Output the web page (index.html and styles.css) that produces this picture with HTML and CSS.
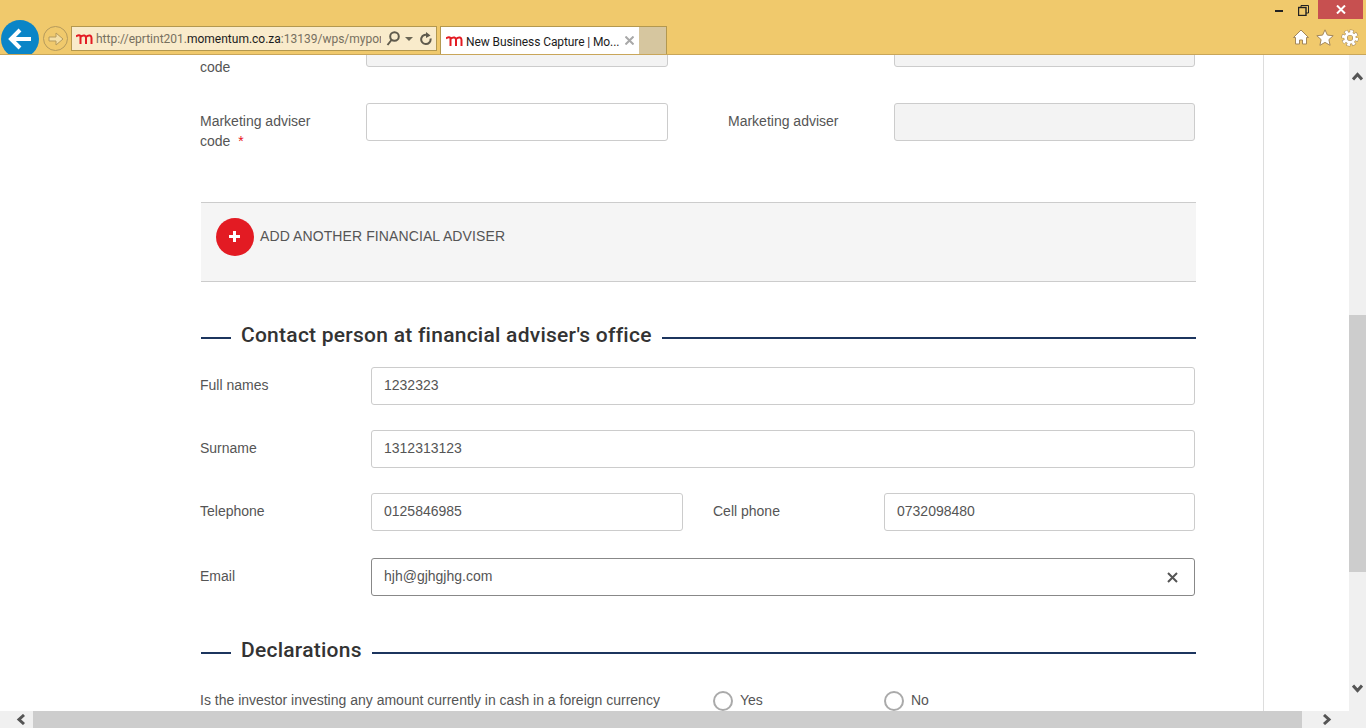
FILE: index.html
```html
<!DOCTYPE html>
<html lang="en">
<head>
  <meta charset="UTF-8" />
  <title>New Business Capture | Momentum</title>
  <meta name="viewport" content="width=device-width, initial-scale=1" />
  <link rel="stylesheet" href="styles.css">
</head>
<body>
  <header class="toolbar">
    <div class="window-controls">
      <span class="win-btn"><svg width="8" height="2"><rect width="8" height="2" fill="#222"/></svg></span>
      <span class="win-btn"><svg width="11" height="11" fill="none" stroke="#222"><path d="M3 2.500V.5h7.500v7.500H8"/><rect x=".5" y="2.500" width="7.500" height="8" stroke-width="1.400"/></svg></span>
      <span class="win-close"><svg width="10" height="9" stroke="#fff" stroke-width="2"><path d="M1 .5l8 8M9 .5l-8 8"/></svg></span>
    </div>
    <div class="nav-row">
      <span class="back-btn">
        <svg width="24" height="22" fill="none" stroke="#fff" stroke-width="4"><path d="M23 11H4M12 2l-9 9 9 9"/></svg>
      </span>
      <span class="forward-btn">
        <svg width="16" height="14" fill="#f4dfa6" stroke="#b59a5c"><path d="M1 5h7V1l7 6-7 6V9H1z"/></svg>
      </span>
      <div class="address">
        <svg class="logo" width="17" height="10" fill="none" stroke="#e31b23" stroke-width="2"><path d="M0 2.500Q3 .5 4.500 2V10M4.500 3Q6.500 1 8.500 1.500 10 2 10 4v6M10 3q2-2 4-1.500 1.500.5 1.500 2.500v6"/></svg>
        <span class="url">http://eprtint201.<b>momentum.co.za</b>:13139/wps/mypor</span>
        <svg class="addr-icon" width="14" height="15" fill="none" stroke="#5f5a4c" stroke-width="2"><circle cx="8.500" cy="5.500" r="4.300"/><path d="M5.500 9l-4 5"/></svg>
        <svg class="addr-caret" width="8" height="4"><path d="M0 0h8L4 4z" fill="#6b6655"/></svg>
        <svg class="addr-refresh" width="12" height="14" fill="none" stroke="#5f5a4c" stroke-width="2"><path d="M8.500 3.500a4.700 4.700 0 1 0 2 3"/><path d="M6 0l4.500 3.500L6 6" fill="#5f5a4c" stroke="none"/></svg>
      </div>
      <div class="tab">
        <svg class="logo" width="17" height="10" fill="none" stroke="#e31b23" stroke-width="2"><path d="M0 2.500Q3 .5 4.500 2V10M4.500 3Q6.500 1 8.500 1.500 10 2 10 4v6M10 3q2-2 4-1.500 1.500.5 1.500 2.500v6"/></svg>
        <span class="tab-title">New Business Capture | Mo...</span>
        <svg class="tab-close" width="9" height="9" stroke="#a8a8a8" stroke-width="2"><path d="M.5.500l8 8M8.500.500l-8 8"/></svg>
      </div>
      <div class="new-tab"></div>
      <div class="tools">
        <svg width="16" height="16" fill="#fff" stroke="#a3875a"><path d="M8 1l7.500 7.500h-2V15H9.500v-4h-3v4H2.500V8.500h-2z"/></svg>
        <svg width="18" height="17" fill="#fff" stroke="#a3875a"><path d="M9 .8l2.400 5.300 5.800.6-4.300 3.900 1.200 5.700L9 13.400l-5.100 2.900 1.200-5.700L.8 6.700l5.800-.6z"/></svg>
        <svg width="18" height="18" fill="none"><circle cx="9" cy="9" r="6.600" stroke="#a3875a" stroke-width="4" stroke-dasharray="3.600 1.580" stroke-dashoffset=".4"/><circle cx="9" cy="9" r="4.400" stroke="#a3875a" stroke-width="4"/><circle cx="9" cy="9" r="6.600" stroke="#fff" stroke-width="3" stroke-dasharray="2.800 2.380"/><circle cx="9" cy="9" r="4.400" stroke="#fff" stroke-width="2.800"/></svg>
      </div>
    </div>
  </header>

  <div class="shell">
    <main class="pane">
      <div class="page">
        <form class="content">
          <div class="row row-top">
            <label class="field-label label-scrolled">code</label>
            <input type="text" disabled>
            <span></span>
            <input type="text" disabled>
          </div>
          <div class="row row-top">
            <label class="field-label">Marketing adviser<br>code <span class="required">*</span></label>
            <input type="text">
            <label class="field-label label-right">Marketing adviser</label>
            <input type="text" disabled>
          </div>

          <div class="add-box">
            <span class="add-icon"><svg width="11" height="11" fill="#fff"><path d="M4 0h3v4h4v3H7v4H4V7H0V4h4z"/></svg></span>
            <span class="add-text">ADD ANOTHER FINANCIAL ADVISER</span>
          </div>

          <h2 class="section-title contact-title"><span>Contact person at financial adviser's office</span></h2>
          <div class="row row-wide">
            <label class="field-label">Full names</label>
            <input type="text" value="1232323">
          </div>
          <div class="row row-wide">
            <label class="field-label">Surname</label>
            <input type="text" value="1312313123">
          </div>
          <div class="row row-split">
            <label class="field-label">Telephone</label>
            <input type="text" value="0125846985">
            <label class="field-label label-split">Cell phone</label>
            <input type="text" value="0732098480">
          </div>
          <div class="row row-wide">
            <label class="field-label">Email</label>
            <div class="input-wrap">
              <input class="input-active" type="text" value="hjh@gjhgjhg.com">
              <svg class="clear-icon" width="11" height="11" stroke="#555" stroke-width="2"><path d="M1 1l9 9M10 1l-9 9"/></svg>
            </div>
          </div>

          <h2 class="section-title declarations-title"><span>Declarations</span></h2>
          <div class="question">
            <span class="question-text">Is the investor investing any amount currently in cash in a foreign currency</span>
            <label class="radio"><span class="radio-dot"></span>Yes</label>
            <label class="radio"><span class="radio-dot"></span>No</label>
          </div>
        </form>
      </div>
    </main>

    <div class="vbar">
      <svg class="arrow-up" width="11" height="10" fill="none" stroke="#555" stroke-width="3"><path d="M1 8.500l4.500-5 4.500 5"/></svg>
      <div class="vthumb"></div>
      <svg class="arrow-down" width="11" height="10" fill="none" stroke="#555" stroke-width="3"><path d="M1 1.500l4.500 5 4.500-5"/></svg>
    </div>

    <div class="hbar">
      <svg class="arrow-left" width="10" height="11" fill="none" stroke="#555" stroke-width="3"><path d="M8 1L3 5.500 8 10"/></svg>
      <div class="hthumb"></div>
      <svg class="arrow-right" width="10" height="11" fill="none" stroke="#555" stroke-width="3"><path d="M2 1l5 4.500L2 10"/></svg>
    </div>
  </div>
</body>
</html>
```

FILE: styles.css
```css
* {
  box-sizing: border-box;
}
html, body {
  margin: 0;
  height: 100%;
  overflow: hidden;
}
body {
  display: flex;
  flex-direction: column;
  height: 728px;
  font-family: 'Liberation Sans', Arial, sans-serif;
  font-size: 14px;
  color: #555;
  background: #fff;
}

/* browser chrome */
.toolbar {
  height: 55px;
  flex: none;
  background: #f0c96c;
  border-bottom: 1px solid #c9a65a;
  overflow: hidden;
}
.window-controls {
  display: flex;
  justify-content: flex-end;
  height: 19px;
  padding-right: 3px;
}
.win-btn {
  width: 25px;
  display: flex;
  align-items: center;
  justify-content: center;
  padding-top: 2px;
}
.win-close {
  width: 45px;
  margin-left: 2px;
  background: #c75050;
  display: flex;
  align-items: center;
  justify-content: center;
}
.nav-row {
  display: flex;
  height: 35px;
  padding-left: 1px;
}
.back-btn {
  width: 38px;
  height: 38px;
  margin-top: 1px;
  flex: none;
  border-radius: 50%;
  background: #0a85c7;
  display: flex;
  align-items: center;
  justify-content: center;
}
.forward-btn {
  width: 25px;
  height: 25px;
  margin: 7px 0 0 4px;
  flex: none;
  border-radius: 50%;
  border: 1px solid #b59a5c;
  display: flex;
  align-items: center;
  justify-content: center;
}
.address {
  width: 366px;
  height: 25px;
  margin: 7px 0 0 3px;
  flex: none;
  display: flex;
  align-items: center;
  padding-left: 4px;
  background: #f9ebcb;
  border: 1px solid #b3984f;
  font-family: Roboto, sans-serif;
  font-size: 12px;
  color: #77705f;
}
.url {
  width: 285px;
  margin: 1px 0 0 3px;
  flex: none;
  overflow: hidden;
  white-space: nowrap;
}
.url b {
  font-weight: normal;
  color: #1c1c1c;
}
.addr-icon {
  margin-left: 5px;
}
.addr-caret {
  margin-left: 5px;
}
.addr-refresh {
  margin-left: 7px;
}
.tab {
  width: 199px;
  height: 28px;
  margin: 7px 0 0 3px;
  flex: none;
  display: flex;
  align-items: center;
  padding-left: 5px;
  background: #fff;
  border: 1px solid #b3984f;
  border-bottom: none;
  border-right: none;
  font-family: Roboto, sans-serif;
  font-size: 12px;
  letter-spacing: -0.1px;
  color: #1c1c1c;
}
.tab-title {
  margin: 3px 0 0 3px;
  white-space: nowrap;
}
.tab-close {
  margin-left: auto;
  margin-right: 5px;
}
.new-tab {
  width: 28px;
  height: 28px;
  margin-top: 7px;
  flex: none;
  background: #d6c69f;
  border: 1px solid #b3984f;
  border-left: none;
  border-bottom: none;
}
.tools {
  margin-left: auto;
  display: flex;
  align-items: flex-start;
  gap: 7px;
  padding: 10px 7px 0 0;
}

/* scrolled page area */
.shell {
  flex: 1;
  display: grid;
  grid-template-columns: 1fr 17px;
  grid-template-rows: 1fr 17px;
  min-height: 0;
}
.pane {
  overflow: hidden;
}
.page {
  width: 1264px;
  height: 656px;
  border-right: 1px solid #ddd;
  overflow: hidden;
}
.content {
  width: 996px;
  margin: -26px 0 0 200px;
}
.row {
  display: grid;
}
.row-top {
  grid-template-columns: 166px 302px 226px 301px;
  margin-bottom: 26px;
}
.row-top + .row-top {
  margin-bottom: 51px;
}
.row-wide {
  grid-template-columns: 171px 824px;
  margin-bottom: 25px;
}
.row-split {
  grid-template-columns: 171px 312px 201px 311px;
  margin-bottom: 27px;
}
.field-label {
  padding-top: 8px;
  line-height: 20px;
}
.label-scrolled {
  padding-top: 28px;
}
.label-right {
  padding-left: 60px;
}
.label-split {
  padding-left: 30px;
}
.required {
  color: #e8131b;
  margin-left: 4px;
}
input {
  width: 100%;
  height: 38px;
  padding: 0 12px 2px;
  font: inherit;
  color: #555;
  background: #fff;
  border: 1px solid #ccc;
  border-radius: 3px;
}
input:disabled {
  background: #f3f3f3;
}
.input-active {
  border-color: #888;
}
.input-wrap {
  position: relative;
}
.clear-icon {
  position: absolute;
  right: 17px;
  top: 14px;
}
.add-box {
  height: 80px;
  margin-left: 1px;
  padding: 15px 15px 0;
  display: flex;
  gap: 6px;
  background: #f5f5f5;
  border-top: 1px solid #ccc;
  border-bottom: 1px solid #ccc;
}
.add-icon {
  width: 38px;
  height: 38px;
  padding: 0 1px 2px 0;
  border-radius: 50%;
  background: #e31b23;
  display: flex;
  align-items: center;
  justify-content: center;
}
.add-text {
  line-height: 37px;
  letter-spacing: 0.1px;
}
.section-title {
  display: flex;
  align-items: center;
  gap: 10px;
  height: 30px;
  margin: 38px 0 17px 1px;
  font-family: Roboto, sans-serif;
  font-size: 21px;
  font-weight: 500;
  letter-spacing: 0.25px;
  color: #333;
}
.section-title::before,
.section-title::after {
  content: "";
  height: 2px;
  margin-top: 6px;
  background: #1c355e;
}
.section-title::before {
  width: 30px;
}
.section-title::after {
  flex: 1;
}
.declarations-title {
  margin-top: 39px;
  margin-bottom: 25px;
}
.question {
  display: grid;
  grid-template-columns: 513px 171px 171px;
  line-height: 20px;
}
.radio {
  display: flex;
  gap: 7px;
}
.radio-dot {
  width: 20px;
  height: 20px;
  margin-top: 1px;
  border: 2px solid #aaa;
  border-radius: 50%;
}

/* scrollbars */
.vbar {
  grid-row: 1 / 3;
  grid-column: 2;
  display: flex;
  flex-direction: column;
  align-items: center;
  background: #f0f0f0;
}
.arrow-up {
  margin-top: 16px;
  flex: none;
}
.vthumb {
  width: 17px;
  height: 257px;
  margin-top: 234px;
  flex: none;
  background: #cdcdcd;
}
.arrow-down {
  margin-top: 112px;
  flex: none;
}
.hbar {
  grid-row: 2;
  grid-column: 1;
  display: flex;
  align-items: center;
  background: #f0f0f0;
}
.arrow-left {
  margin-left: 16px;
  flex: none;
}
.hthumb {
  width: 1269px;
  height: 17px;
  margin-left: 7px;
  flex: none;
  background: #cdcdcd;
}
.arrow-right {
  margin-left: 20px;
  flex: none;
}
```
